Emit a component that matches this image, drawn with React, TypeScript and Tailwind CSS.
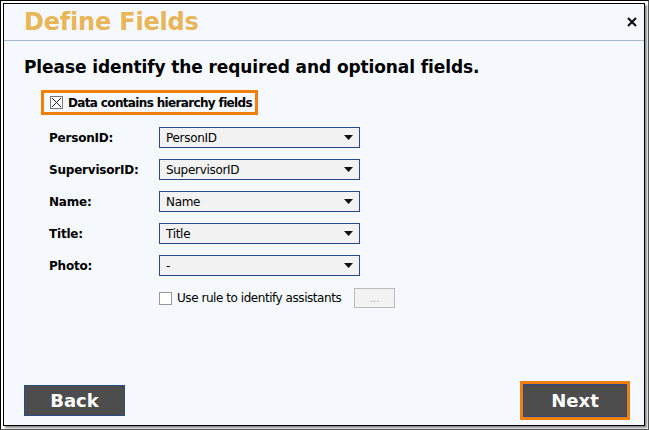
import React from "react";

const fields = [
  { label: "PersonID:", value: "PersonID" },
  { label: "SupervisorID:", value: "SupervisorID" },
  { label: "Name:", value: "Name" },
  { label: "Title:", value: "Title" },
  { label: "Photo:", value: "-" },
];

function Caret() {
  return (
    <svg width="9" height="5" viewBox="0 0 9 5" className="shrink-0">
      <path d="M0 0 H9 L4.5 5 Z" fill="#111" />
    </svg>
  );
}

export default function App() {
  return (
    <div
      className="w-[649px] h-[430px] bg-white border border-black border-r-[#555] border-b-[#555] pt-[2px] pl-[2px]"
      style={{ fontFamily: '"DejaVu Sans", Verdana, sans-serif' }}
    >
      <div className="w-[642px] h-[423px] bg-[#f5f9fd] border border-black shadow-[2px_2px_2px_rgba(0,0,0,0.45)] flex flex-col">
        {/* Header */}
        <div className="h-[37px] border-b border-[#a7b9d1] flex items-center justify-between pl-[20px] pr-[7px]">
          <h1 className="text-[24px] font-bold text-[#e9b559] tracking-[-0.2px] leading-none">Define Fields</h1>
          <svg width="10" height="10" viewBox="0 0 10 10">
            <path d="M1 1 L9 9 M9 1 L1 9" stroke="#111" strokeWidth="2.2" />
          </svg>
        </div>

        {/* Body */}
        <div className="flex-1 flex flex-col pl-[20px]">
          <h2 className="mt-[15px] text-[17px] font-bold text-black tracking-[-0.1px] leading-[22px]">
            Please identify the required and optional fields.
          </h2>

          <div className="mt-[12px] ml-[17px] w-fit h-[25px] border-[3px] border-[#f27f0c] flex items-center gap-[5px] pl-[6px] pr-[3px]">
            <span className="w-[13px] h-[13px] border border-[#777] bg-white flex items-center justify-center">
              <svg width="11" height="11" viewBox="0 0 11 11">
                <path d="M1 1 L10 10 M10 1 L1 10" stroke="#222" strokeWidth="1" />
              </svg>
            </span>
            <span className="text-[12px] font-bold text-black tracking-[-0.65px] whitespace-nowrap">Data contains hierarchy fields</span>
          </div>

          <div className="mt-[12px] ml-[25px] flex flex-col gap-[11px]">
            {fields.map((f) => (
              <div key={f.label} className="flex items-center h-[21px]">
                <span className="w-[110px] text-[12px] font-bold text-black tracking-[-0.2px] leading-[16px]">{f.label}</span>
                <div className="w-[201px] h-[21px] border border-[#2b4a8a] bg-[#f2f2f2] flex items-center justify-between pl-[6px] pr-[6px]">
                  <span className="text-[12px] text-black tracking-[-0.3px] leading-[16px]">{f.value}</span>
                  <Caret />
                </div>
              </div>
            ))}
          </div>

          <div className="mt-[12px] ml-[135px] flex items-center">
            <span className="w-[13px] h-[13px] border border-[#999] bg-white" />
            <span className="ml-[5px] text-[12px] text-black tracking-[-0.45px]">Use rule to identify assistants</span>
            <span className="ml-[13px] w-[41px] h-[20px] border border-[#bbb] bg-[#f2f2f2] flex items-center justify-center text-[10px] text-[#aaa]">...</span>
          </div>

          <div className="mt-auto mb-[5px] flex items-end justify-between pr-[14px]">
            <button className="mb-[4px] w-[101px] h-[31px] bg-[#4d4d4d] border border-[#2b4a8a] text-white font-bold text-[18px]">Back</button>
            <div className="border-[3px] border-[#f27f0c]">
              <button className="w-[104px] h-[33px] bg-[#4d4d4d] border border-[#2b4a8a] text-white font-bold text-[18px] block">Next</button>
            </div>
          </div>
        </div>
      </div>
    </div>
  );
}
